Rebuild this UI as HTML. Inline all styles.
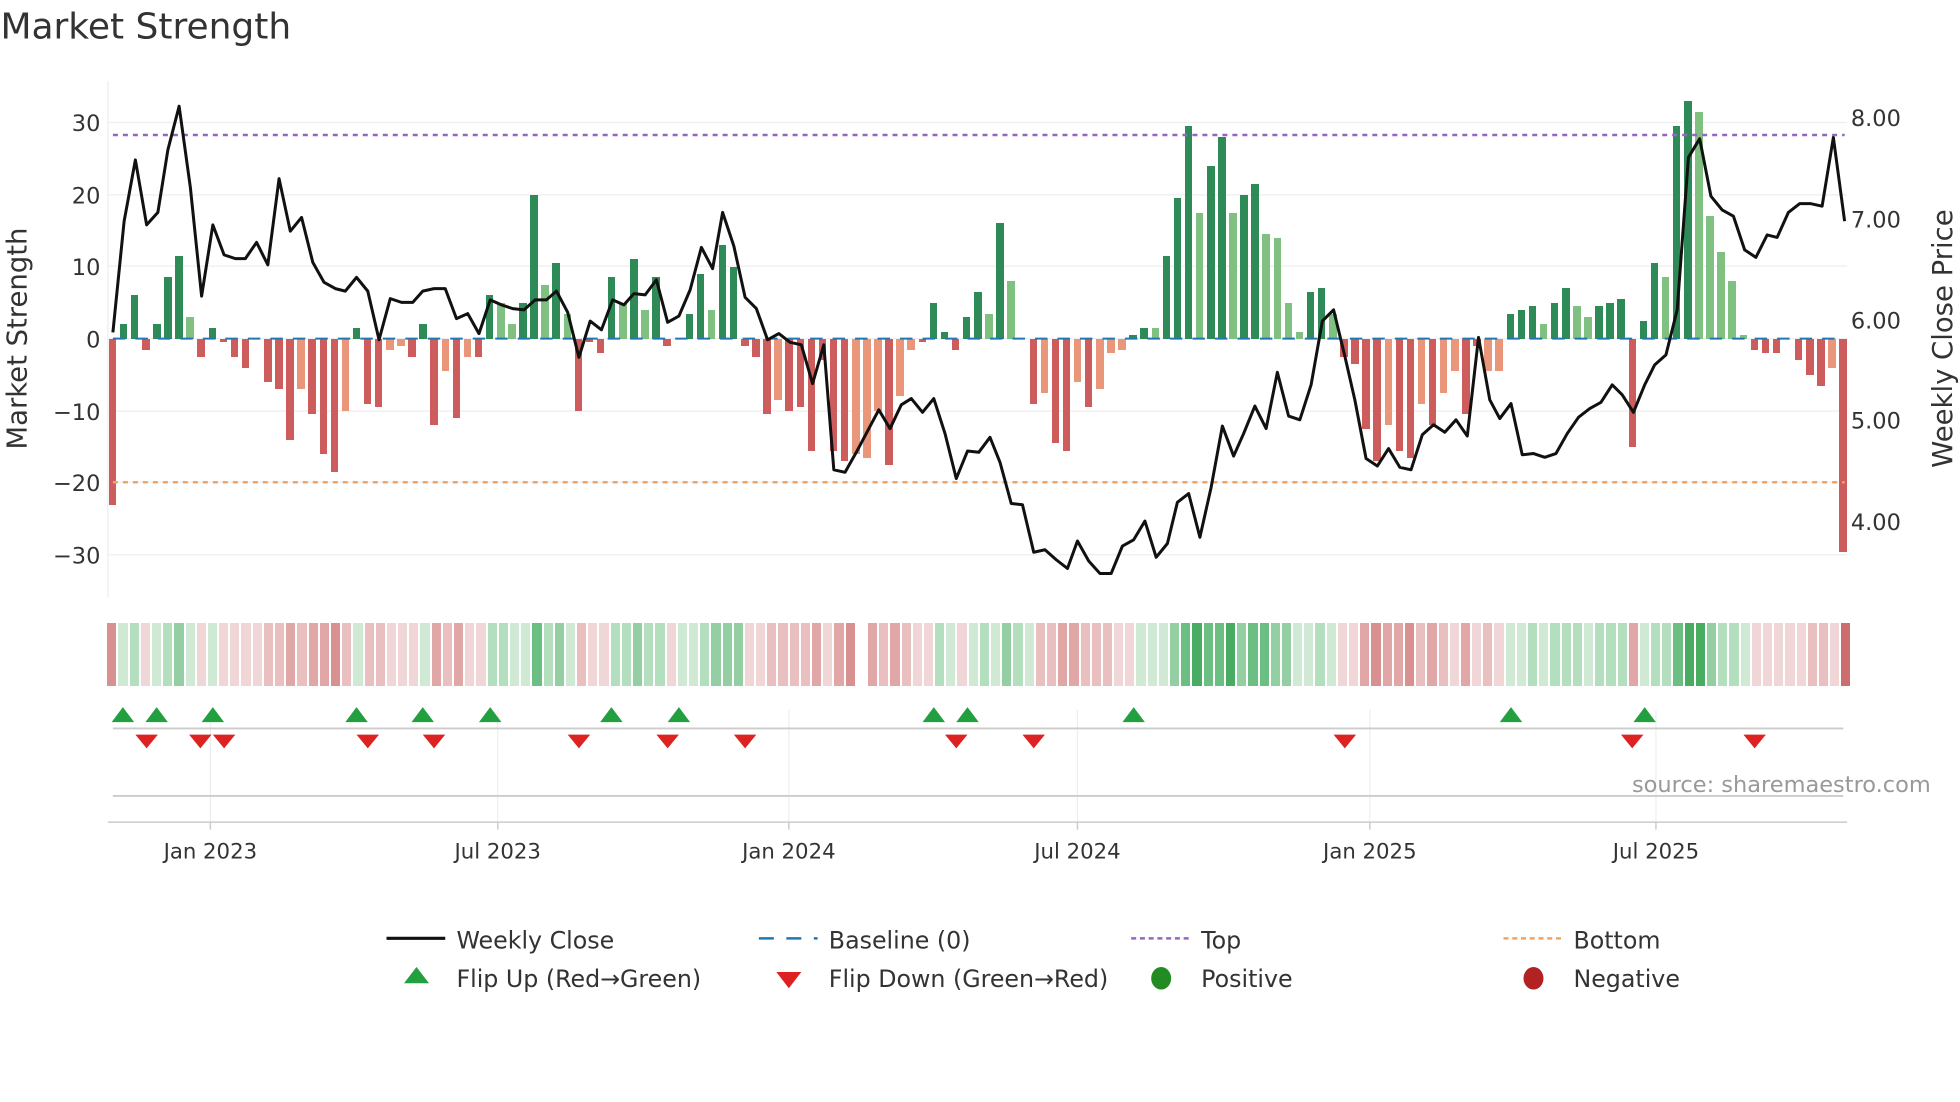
<!DOCTYPE html>
<html><head><meta charset="utf-8"><style>
html,body{margin:0;padding:0;background:#fff;}
body{position:relative;width:1960px;height:1102px;overflow:hidden;}
svg{display:block;position:absolute;left:0;top:0;font-family:"DejaVu Sans","Liberation Sans",sans-serif;}
#bars{position:absolute;left:106.95px;top:0;height:700px;display:flex;z-index:1;}
#bars i{display:block;flex:none;width:11.106px;height:700px;position:relative;}
#bars i::after{content:"";position:absolute;left:1.8px;width:7.5px;bottom:361.25px;height:calc(var(--v,0)*7.2125px);}
#bars i.n::after{bottom:auto;top:338.75px;}
#bars i.g::after{background:#2e8b57}#bars i.l::after{background:#80c080}
#bars i.r::after{background:#cd5c5c}#bars i.o::after{background:#e9967a}
#strip{position:absolute;left:106.2px;top:622.5px;height:63.75px;display:flex;}
#strip b{display:block;flex:none;width:11.19px;height:63.75px;position:relative;}
#strip b::after{content:"";position:absolute;left:1px;width:9.2px;top:0;bottom:0;}
.g1::after{background:#cfe9d5}.g2::after{background:#b3dfbf}.g3::after{background:#93cfa3}.g4::after{background:#6cbf82}.g5::after{background:#48ac62}
.r1::after{background:#f1d6d8}.r2::after{background:#e9bfc0}.r3::after{background:#e1a7a7}.r4::after{background:#d99090}.r5::after{background:#cc6e6e}
#top{z-index:2;}
</style></head><body>
<svg width="1960" height="1102" viewBox="0 0 1568 882" xmlns="http://www.w3.org/2000/svg">
<rect width="1568" height="882" fill="#fff"/>
<text x="0" y="31" font-size="28.8" fill="#333">Market Strength</text>
<g stroke="#eeeeee" stroke-width="1">
<line x1="86" x2="1478" y1="98" y2="98"/><line x1="86" x2="1478" y1="156" y2="156"/>
<line x1="86" x2="1478" y1="213" y2="213"/><line x1="86" x2="1478" y1="271" y2="271"/>
<line x1="86" x2="1478" y1="329" y2="329"/><line x1="86" x2="1478" y1="386" y2="386"/>
<line x1="86" x2="1478" y1="444" y2="444"/>
<line x1="86" x2="86" y1="65" y2="478"/>
</g>
<g font-size="18" fill="#333" text-anchor="end">
<text x="80" y="105">30</text><text x="80" y="163">20</text><text x="80" y="220">10</text>
<text x="80" y="278">0</text><text x="80" y="336">−10</text><text x="80" y="393">−20</text><text x="80" y="451">−30</text>
</g>
<g font-size="18" fill="#333">
<text x="1481" y="101">8.00</text><text x="1481" y="182">7.00</text><text x="1481" y="263">6.00</text>
<text x="1481" y="343">5.00</text><text x="1481" y="424">4.00</text>
</g>
<text transform="translate(21,271) rotate(-90)" font-size="22" fill="#333" text-anchor="middle">Market Strength</text>
<text transform="translate(1562,271) rotate(-90)" font-size="22" fill="#333" text-anchor="middle">Weekly Close Price</text>
<g stroke="#eeeeee" stroke-width="1">
<line x1="168" x2="168" y1="568" y2="660"/><line x1="398" x2="398" y1="568" y2="660"/>
<line x1="631" x2="631" y1="568" y2="660"/><line x1="862" x2="862" y1="568" y2="660"/>
<line x1="1096" x2="1096" y1="568" y2="660"/><line x1="1325" x2="1325" y1="568" y2="660"/>
</g>
<line x1="90" x2="1475" y1="583" y2="583" stroke="#cccccc" stroke-width="1.5"/>
<line x1="90" x2="1475" y1="637" y2="637" stroke="#cccccc" stroke-width="1.5"/>
<line x1="86" x2="1478" y1="658" y2="658" stroke="#cccccc" stroke-width="1.2"/>
<g stroke="#cccccc" stroke-width="1.2">
<line x1="168" x2="168" y1="658" y2="664"/><line x1="398" x2="398" y1="658" y2="664"/>
<line x1="631" x2="631" y1="658" y2="664"/><line x1="862" x2="862" y1="658" y2="664"/>
<line x1="1096" x2="1096" y1="658" y2="664"/><line x1="1325" x2="1325" y1="658" y2="664"/>
</g>
<g fill="#22a040">
<polygon points="89,578 107,578 98,566"/><polygon points="116,578 134,578 125,566"/><polygon points="161,578 179,578 170,566"/>
<polygon points="276,578 294,578 285,566"/><polygon points="329,578 347,578 338,566"/><polygon points="383,578 401,578 392,566"/>
<polygon points="480,578 498,578 489,566"/><polygon points="534,578 552,578 543,566"/><polygon points="738,578 756,578 747,566"/>
<polygon points="765,578 783,578 774,566"/><polygon points="898,578 916,578 907,566"/><polygon points="1200,578 1218,578 1209,566"/>
<polygon points="1307,578 1325,578 1316,566"/>
</g>
<g fill="#dd2222">
<polygon points="108,588 126,588 117,599"/><polygon points="151,588 169,588 160,599"/><polygon points="170,588 188,588 179,599"/>
<polygon points="285,588 303,588 294,599"/><polygon points="338,588 356,588 347,599"/><polygon points="454,588 472,588 463,599"/>
<polygon points="525,588 543,588 534,599"/><polygon points="587,588 605,588 596,599"/><polygon points="756,588 774,588 765,599"/>
<polygon points="818,588 836,588 827,599"/><polygon points="1067,588 1085,588 1076,599"/><polygon points="1297,588 1315,588 1306,599"/>
<polygon points="1395,588 1413,588 1404,599"/>
</g>
<text x="1545" y="634" font-size="18" fill="#999" text-anchor="end">source: sharemaestro.com</text>
<g font-size="17" fill="#333" text-anchor="middle">
<text x="168" y="687">Jan 2023</text><text x="398" y="687">Jul 2023</text><text x="631" y="687">Jan 2024</text>
<text x="862" y="687">Jul 2024</text><text x="1096" y="687">Jan 2025</text><text x="1325" y="687">Jul 2025</text>
</g>
<g font-size="19" fill="#333">
<line x1="309" x2="356" y1="751" y2="751" stroke="#111" stroke-width="2.5"/><text x="365" y="759">Weekly Close</text>
<line x1="607" x2="654" y1="751" y2="751" stroke="#1f77b4" stroke-width="2" stroke-dasharray="12,10"/><text x="663" y="759">Baseline (0)</text>
<line x1="905" x2="952" y1="751" y2="751" stroke="#9467bd" stroke-width="2" stroke-dasharray="4,3"/><text x="961" y="759">Top</text>
<line x1="1203" x2="1250" y1="751" y2="751" stroke="#f4a460" stroke-width="2" stroke-dasharray="4,3"/><text x="1259" y="759">Bottom</text>
<polygon points="323,787 343,787 333,774" fill="#22a040"/><text x="365" y="790">Flip Up (Red→Green)</text>
<polygon points="621,778 641,778 631,791" fill="#dd2222"/><text x="663" y="790">Flip Down (Green→Red)</text>
<ellipse cx="929" cy="783" rx="8" ry="9" fill="#228b22"/><text x="961" y="790">Positive</text>
<ellipse cx="1227" cy="783" rx="8" ry="9" fill="#b22222"/><text x="1259" y="790">Negative</text>
</g>
</svg>
<div id="bars"><i class="r n" style="--v:23"></i><i class="g" style="--v:2"></i><i class="g" style="--v:6"></i><i class="r n" style="--v:1.5"></i><i class="g" style="--v:2"></i><i class="g" style="--v:8.5"></i><i class="g" style="--v:11.5"></i><i class="l" style="--v:3"></i><i class="r n" style="--v:2.5"></i><i class="g" style="--v:1.5"></i><i class="r n" style="--v:0.5"></i><i class="r n" style="--v:2.5"></i><i class="r n" style="--v:4"></i><i></i><i class="r n" style="--v:6"></i><i class="r n" style="--v:7"></i><i class="r n" style="--v:14"></i><i class="o n" style="--v:7"></i><i class="r n" style="--v:10.5"></i><i class="r n" style="--v:16"></i><i class="r n" style="--v:18.5"></i><i class="o n" style="--v:10"></i><i class="g" style="--v:1.5"></i><i class="r n" style="--v:9"></i><i class="r n" style="--v:9.5"></i><i class="o n" style="--v:1.5"></i><i class="o n" style="--v:1"></i><i class="r n" style="--v:2.5"></i><i class="g" style="--v:2"></i><i class="r n" style="--v:12"></i><i class="o n" style="--v:4.5"></i><i class="r n" style="--v:11"></i><i class="o n" style="--v:2.5"></i><i class="r n" style="--v:2.5"></i><i class="g" style="--v:6"></i><i class="l" style="--v:5"></i><i class="l" style="--v:2"></i><i class="g" style="--v:5"></i><i class="g" style="--v:20"></i><i class="l" style="--v:7.5"></i><i class="g" style="--v:10.5"></i><i class="l" style="--v:3.5"></i><i class="r n" style="--v:10"></i><i class="r n" style="--v:0.5"></i><i class="r n" style="--v:2"></i><i class="g" style="--v:8.5"></i><i class="l" style="--v:5"></i><i class="g" style="--v:11"></i><i class="l" style="--v:4"></i><i class="g" style="--v:8.5"></i><i class="r n" style="--v:1"></i><i></i><i class="g" style="--v:3.5"></i><i class="g" style="--v:9"></i><i class="l" style="--v:4"></i><i class="g" style="--v:13"></i><i class="g" style="--v:10"></i><i class="r n" style="--v:1"></i><i class="r n" style="--v:2.5"></i><i class="r n" style="--v:10.5"></i><i class="o n" style="--v:8.5"></i><i class="r n" style="--v:10"></i><i class="r n" style="--v:9.5"></i><i class="r n" style="--v:15.5"></i><i class="r n" style="--v:3"></i><i class="r n" style="--v:15.5"></i><i class="r n" style="--v:17"></i><i class="o n" style="--v:16"></i><i class="o n" style="--v:16.5"></i><i class="o n" style="--v:10"></i><i class="r n" style="--v:17.5"></i><i class="o n" style="--v:8"></i><i class="o n" style="--v:1.5"></i><i class="r n" style="--v:0.5"></i><i class="g" style="--v:5"></i><i class="g" style="--v:1"></i><i class="r n" style="--v:1.5"></i><i class="g" style="--v:3"></i><i class="g" style="--v:6.5"></i><i class="l" style="--v:3.5"></i><i class="g" style="--v:16"></i><i class="l" style="--v:8"></i><i></i><i class="r n" style="--v:9"></i><i class="o n" style="--v:7.5"></i><i class="r n" style="--v:14.5"></i><i class="r n" style="--v:15.5"></i><i class="o n" style="--v:6"></i><i class="r n" style="--v:9.5"></i><i class="o n" style="--v:7"></i><i class="o n" style="--v:2"></i><i class="o n" style="--v:1.5"></i><i class="g" style="--v:0.5"></i><i class="g" style="--v:1.5"></i><i class="l" style="--v:1.5"></i><i class="g" style="--v:11.5"></i><i class="g" style="--v:19.5"></i><i class="g" style="--v:29.5"></i><i class="l" style="--v:17.5"></i><i class="g" style="--v:24"></i><i class="g" style="--v:28"></i><i class="l" style="--v:17.5"></i><i class="g" style="--v:20"></i><i class="g" style="--v:21.5"></i><i class="l" style="--v:14.5"></i><i class="l" style="--v:14"></i><i class="l" style="--v:5"></i><i class="l" style="--v:1"></i><i class="g" style="--v:6.5"></i><i class="g" style="--v:7"></i><i class="l" style="--v:3.5"></i><i class="r n" style="--v:2.5"></i><i class="r n" style="--v:3.5"></i><i class="r n" style="--v:12.5"></i><i class="r n" style="--v:17"></i><i class="o n" style="--v:12"></i><i class="r n" style="--v:15.5"></i><i class="r n" style="--v:16.5"></i><i class="o n" style="--v:9"></i><i class="r n" style="--v:12"></i><i class="o n" style="--v:7.5"></i><i class="o n" style="--v:4.5"></i><i class="r n" style="--v:10.5"></i><i class="r n" style="--v:1"></i><i class="o n" style="--v:4.5"></i><i class="o n" style="--v:4.5"></i><i class="g" style="--v:3.5"></i><i class="g" style="--v:4"></i><i class="g" style="--v:4.5"></i><i class="l" style="--v:2"></i><i class="g" style="--v:5"></i><i class="g" style="--v:7"></i><i class="l" style="--v:4.5"></i><i class="l" style="--v:3"></i><i class="g" style="--v:4.5"></i><i class="g" style="--v:5"></i><i class="g" style="--v:5.5"></i><i class="r n" style="--v:15"></i><i class="g" style="--v:2.5"></i><i class="g" style="--v:10.5"></i><i class="l" style="--v:8.5"></i><i class="g" style="--v:29.5"></i><i class="g" style="--v:33"></i><i class="l" style="--v:31.5"></i><i class="l" style="--v:17"></i><i class="l" style="--v:12"></i><i class="l" style="--v:8"></i><i class="l" style="--v:0.5"></i><i class="r n" style="--v:1.5"></i><i class="r n" style="--v:2"></i><i class="r n" style="--v:2"></i><i></i><i class="r n" style="--v:3"></i><i class="r n" style="--v:5"></i><i class="r n" style="--v:6.5"></i><i class="o n" style="--v:4"></i><i class="r n" style="--v:29.5"></i></div>
<div id="strip"><b class="r4"></b><b class="g1"></b><b class="g2"></b><b class="r1"></b><b class="g1"></b><b class="g2"></b><b class="g3"></b><b class="g1"></b><b class="r1"></b><b class="g1"></b><b class="r1"></b><b class="r1"></b><b class="r1"></b><b class="r1"></b><b class="r2"></b><b class="r2"></b><b class="r3"></b><b class="r2"></b><b class="r3"></b><b class="r3"></b><b class="r4"></b><b class="r2"></b><b class="g1"></b><b class="r2"></b><b class="r2"></b><b class="r1"></b><b class="r1"></b><b class="r1"></b><b class="g1"></b><b class="r3"></b><b class="r2"></b><b class="r3"></b><b class="r1"></b><b class="r1"></b><b class="g2"></b><b class="g2"></b><b class="g1"></b><b class="g1"></b><b class="g4"></b><b class="g2"></b><b class="g3"></b><b class="g1"></b><b class="r2"></b><b class="r1"></b><b class="r1"></b><b class="g2"></b><b class="g2"></b><b class="g3"></b><b class="g2"></b><b class="g2"></b><b class="r1"></b><b class="g1"></b><b class="g1"></b><b class="g2"></b><b class="g3"></b><b class="g3"></b><b class="g3"></b><b class="r1"></b><b class="r1"></b><b class="r2"></b><b class="r2"></b><b class="r2"></b><b class="r2"></b><b class="r3"></b><b class="r1"></b><b class="r3"></b><b class="r4"></b><b></b><b class="r3"></b><b class="r2"></b><b class="r3"></b><b class="r2"></b><b class="r1"></b><b class="r1"></b><b class="g2"></b><b class="g1"></b><b class="r1"></b><b class="g1"></b><b class="g2"></b><b class="g1"></b><b class="g3"></b><b class="g2"></b><b class="g1"></b><b class="r2"></b><b class="r2"></b><b class="r3"></b><b class="r3"></b><b class="r2"></b><b class="r2"></b><b class="r2"></b><b class="r1"></b><b class="r1"></b><b class="g1"></b><b class="g1"></b><b class="g1"></b><b class="g3"></b><b class="g4"></b><b class="g5"></b><b class="g4"></b><b class="g4"></b><b class="g5"></b><b class="g3"></b><b class="g4"></b><b class="g4"></b><b class="g3"></b><b class="g3"></b><b class="g1"></b><b class="g1"></b><b class="g2"></b><b class="g1"></b><b class="r1"></b><b class="r1"></b><b class="r3"></b><b class="r4"></b><b class="r3"></b><b class="r3"></b><b class="r4"></b><b class="r2"></b><b class="r3"></b><b class="r2"></b><b class="r1"></b><b class="r3"></b><b class="r1"></b><b class="r2"></b><b class="r1"></b><b class="g1"></b><b class="g1"></b><b class="g2"></b><b class="g1"></b><b class="g2"></b><b class="g2"></b><b class="g2"></b><b class="g1"></b><b class="g2"></b><b class="g2"></b><b class="g2"></b><b class="r3"></b><b class="g1"></b><b class="g2"></b><b class="g2"></b><b class="g4"></b><b class="g5"></b><b class="g5"></b><b class="g3"></b><b class="g2"></b><b class="g2"></b><b class="g1"></b><b class="r1"></b><b class="r1"></b><b class="r1"></b><b class="r1"></b><b class="r1"></b><b class="r2"></b><b class="r2"></b><b class="r1"></b><b class="r5"></b></div>
<svg id="top" width="1960" height="1102" viewBox="0 0 1568 882" xmlns="http://www.w3.org/2000/svg" style="pointer-events:none">
<line x1="90" x2="1476" y1="271" y2="271" stroke="#1f77b4" stroke-width="1.6" stroke-dasharray="10,8"/>
<line x1="90" x2="1476" y1="108" y2="108" stroke="#9467bd" stroke-width="2" stroke-dasharray="4,4"/>
<line x1="90" x2="1476" y1="386" y2="386" stroke="#f4a460" stroke-width="2" stroke-dasharray="4,4"/>
<polyline fill="none" stroke="#111" stroke-width="2.4" stroke-linejoin="round" points="90,266 99,177 108,128 117,180 126,170 134,120 143,85 152,150 161,237 170,180 179,204 188,207 196,207 205,194 214,212 223,143 232,185 241,174 250,210 259,226 268,231 276,233 285,222 294,233 303,272 312,239 321,242 330,242 338,233 347,231 356,231 365,255 374,251 383,267 392,240 401,244 410,247 419,248 428,240 437,240 445,233 454,250 463,286 472,257 481,264 490,240 499,244 507,235 516,236 525,224 534,258 543,253 552,232 561,198 570,215 578,170 587,197 596,238 605,247 614,272 623,267 632,274 641,276 650,307 659,276 667,376 676,378 685,362 694,345 703,328 712,343 721,324 729,319 738,330 747,319 756,347 765,383 774,361 783,362 792,350 800,370 809,403 818,404 827,442 836,440 845,448 854,455 862,433 871,449 880,459 889,459 898,437 907,432 916,417 925,446 934,435 942,402 951,395 960,430 969,390 978,341 987,365 995,347 1004,325 1013,343 1022,298 1031,333 1040,336 1049,308 1058,257 1067,248 1076,285 1084,320 1093,367 1102,373 1111,359 1120,374 1129,376 1138,348 1147,340 1156,346 1165,336 1174,349 1183,270 1192,320 1200,335 1209,323 1218,364 1227,363 1236,366 1245,363 1254,347 1263,334 1272,327 1281,322 1290,308 1298,316 1307,330 1316,308 1324,292 1333,284 1342,248 1351,126 1360,111 1369,157 1378,168 1387,173 1396,200 1405,206 1414,188 1422,190 1431,170 1440,163 1449,163 1458,165 1467,110 1476,177"/>
</svg>
</body></html>
